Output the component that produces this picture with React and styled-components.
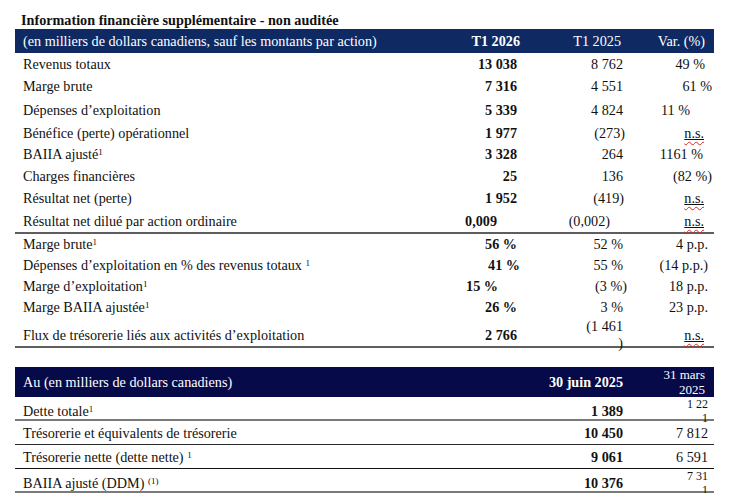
import React from "react";
import styled, { createGlobalStyle } from "styled-components";

const Global = createGlobalStyle`
  html, body { margin: 0; padding: 0; background: #ffffff; }
  body { font-family: "Liberation Serif", "Times New Roman", serif; font-size: 14.2px; color: #111; }
`;

const Page = styled.div`
  width: 741px;
  padding: 11px 0 0 15px;
  box-sizing: border-box;
`;

const Title = styled.div`
  font-weight: bold;
  line-height: 18px;
  padding-left: 6px;
`;

const Table = styled.div`
  width: 699px;
  display: flex;
  flex-direction: column;
  margin-top: ${(p) => p.$mt || 0}px;
`;

const HeadBar = styled.div`
  display: grid;
  grid-template-columns: ${(p) => p.$cols};
  align-items: center;
  height: ${(p) => p.$h}px;
  background: ${(p) => p.$bg};
  color: #ffffff;
  line-height: 16px;
`;

const Row = styled.div`
  display: grid;
  grid-template-columns: ${(p) => p.$cols};
  align-items: center;
  height: ${(p) => p.$h}px;
  border-bottom: ${(p) => p.$line || "none"};
  line-height: 16px;
`;

const Label = styled.div`
  padding-left: 8px;
  white-space: nowrap;
`;

const Value = styled.div`
  text-align: right;
  white-space: nowrap;
  font-weight: ${(p) => (p.$bold ? "bold" : "normal")};
  padding-right: ${(p) => p.$pr}px;
  font-size: ${(p) => p.$fs || 14.2}px;
  line-height: ${(p) => p.$lh || 16}px;
`;

const Sup = styled.sup`
  font-size: 9px;
  line-height: 0;
  vertical-align: 4px;
`;

const NS = styled.span`
  text-decoration: underline wavy #d02a2a;
  text-decoration-thickness: 1px;
  text-underline-offset: 3px;
`;

const NSInner = styled.span`
  text-decoration: underline;
  text-decoration-thickness: 1px;
  text-underline-offset: 1px;
`;

const COLS1 = "1fr 100px 101px 87px";
const COLS2 = "1fr 201px 87px";
const PR1 = [9, 4, 8];

const ns = (
  <NS>
    <NSInner>n.s.</NSInner>
  </NS>
);

const group1 = [
  { label: "Revenus totaux", h: 21, v: [["13 038"], ["8 762"], ["49 %", 9]] },
  { label: "Marge brute", h: 24, v: [["7 316"], ["4 551"], ["61 %", 2]] },
  { label: "Dépenses d’exploitation", h: 24, v: [["5 339"], ["4 824"], ["11 %", 24]] },
  { label: "Bénéfice (perte) opérationnel", h: 21, v: [["1 977"], ["(273)", 2], [ns, 10]] },
  { label: "BAIIA ajusté", sup: "1", h: 22, v: [["3 328"], ["264"], ["1161 %", 11]] },
  { label: "Charges financières", h: 22, v: [["25"], ["136"], ["(82 %)", 2]] },
  { label: "Résultat net (perte)", h: 22, v: [["1 952"], ["(419)", 3], [ns, 10]] },
  { label: "Résultat net dilué par action ordinaire", h: 23, v: [["0,009", 29], ["(0,002)", 17], [ns, 10]] },
];

const group2 = [
  { label: "Marge brute", sup: "1", h: 20, v: [["56 %"], ["52 %"], ["4 p.p.", 6]] },
  { label: "Dépenses d’exploitation en % des revenus totaux ", sup: "1", h: 21, v: [["41 %", 6], ["55 %"], ["(14 p.p.)", 6]] },
  { label: "Marge d’exploitation", sup: "1", h: 21, v: [["15 %", 28], ["(3 %)", 0], ["18 p.p.", 6]] },
  { label: "Marge BAIIA ajustée", sup: "1", h: 22, v: [["26 %"], ["3 %"], ["23 p.p.", 6]] },
  {
    label: "Flux de trésorerie liés aux activités d’exploitation",
    h: 28,
    v: [["2 766"], [<>(1 461<br />)</>, 4, 16.5], [ns, 10]],
  },
];

const balance = [
  { label: "Dette totale", sup: "1", h: 22, line: "2px solid #7a7a7a", v: ["1 389", <>1 22<br />1</>], wrap: true },
  { label: "Trésorerie et équivalents de trésorerie", h: 23, line: "1.5px solid #2a2a2a", v: ["10 450", "7 812"] },
  { label: "Trésorerie nette (dette nette) ", sup: "1", h: 23, line: "1.5px solid #111", v: ["9 061", "6 591"] },
  { label: "BAIIA ajusté (DDM) ", sup: "(1)", h: 22, line: "2px solid #7a7a7a", v: ["10 376", <>7 31<br />1</>], wrap: true },
];

function LabelText({ row }) {
  return (
    <Label>
      {row.label}
      {row.sup && <Sup>{row.sup}</Sup>}
    </Label>
  );
}

function DataRow({ row, line }) {
  return (
    <Row $cols={COLS1} $h={row.h} $line={line}>
      <LabelText row={row} />
      {row.v.map(([text, pr, lh], i) => (
        <Value key={i} $bold={i === 0} $pr={pr ?? PR1[i]} $lh={lh}>
          {text}
        </Value>
      ))}
    </Row>
  );
}

export default function App() {
  return (
    <Page>
      <Global />
      <Title>Information financière supplémentaire - non auditée</Title>
      <Table>
        <HeadBar $cols={COLS1} $h={24} $bg="#0f2a62">
          <Label>(en milliers de dollars canadiens, sauf les montants par action)</Label>
          <Value $bold $pr={6}>T1 2026</Value>
          <Value $pr={6}>T1 2025</Value>
          <Value $pr={9}>Var. (%)</Value>
        </HeadBar>
        {group1.map((row, i) => (
          <DataRow key={i} row={row} line={i === group1.length - 1 ? "2px solid #5e5e5e" : undefined} />
        ))}
        {group2.map((row, i) => (
          <DataRow key={i} row={row} line={i === group2.length - 1 ? "2px solid #5e5e5e" : undefined} />
        ))}
      </Table>
      <Table $mt={19}>
        <HeadBar $cols={COLS2} $h={30} $bg="#070a48">
          <Label>Au (en milliers de dollars canadiens)</Label>
          <Value $bold $pr={4}>30 juin 2025</Value>
          <Value $pr={9} $fs={13} $lh={15}>
            31 mars
            <br />
            2025
          </Value>
        </HeadBar>
        {balance.map((row, i) => (
          <Row key={i} $cols={COLS2} $h={row.h} $line={row.line}>
            <LabelText row={row} />
            <Value $bold $pr={4}>{row.v[0]}</Value>
            <Value $pr={6} $fs={row.wrap ? 12 : undefined} $lh={row.wrap ? 14 : undefined}>
              {row.v[1]}
            </Value>
          </Row>
        ))}
      </Table>
    </Page>
  );
}
